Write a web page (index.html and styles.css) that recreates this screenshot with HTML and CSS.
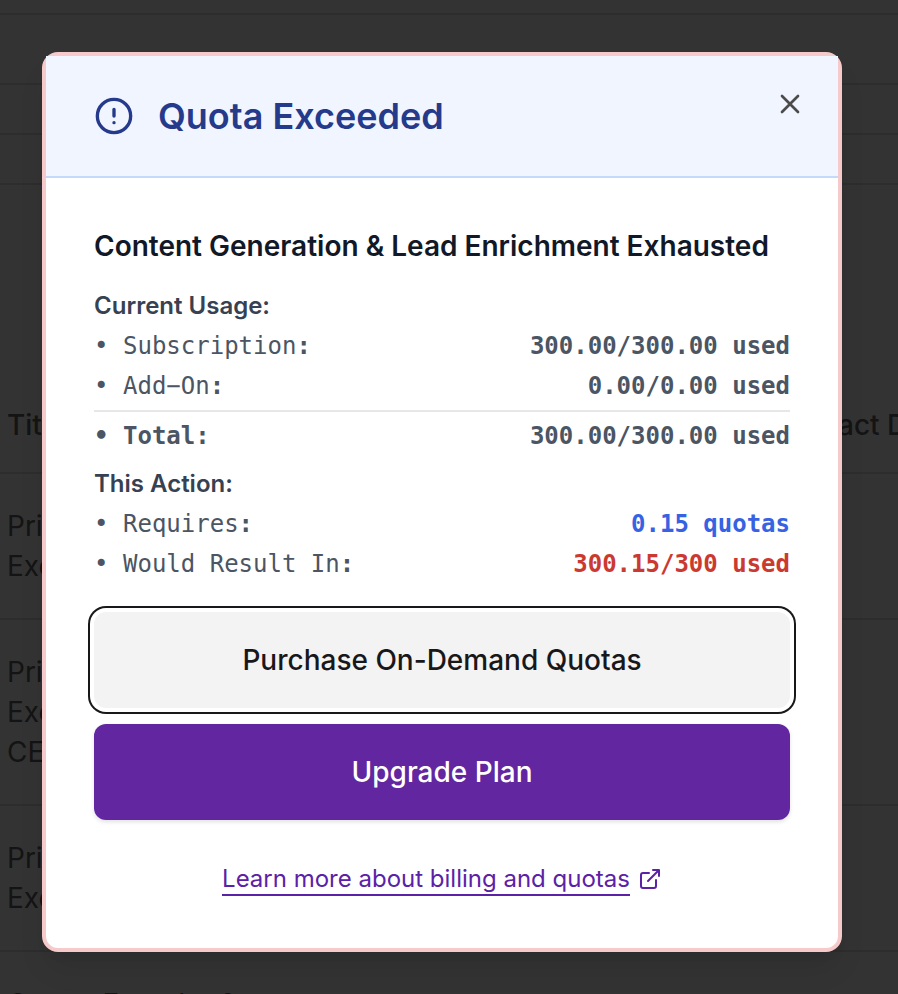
FILE: index.html
```html
<!DOCTYPE html>
<html lang="en">
<head>
<meta charset="utf-8">
<title>Quota Exceeded</title>
<link rel="stylesheet" href="styles.css">
</head>
<body>
<main class="page">
  <div class="bar bar-first"></div>
  <div class="bar bar-nav"></div>
  <div class="bar bar-tabs"></div>
  <div class="bar bar-tools"></div>
  <div class="row head"><span>Title</span><span class="contact">act Details</span></div>
  <div class="row">Pri<br>Exe</div>
  <div class="row">Pri<br>Exe<br>CE</div>
  <div class="row">Pri<br>Exe</div>
  <div class="row last">Owner Founder &amp;</div>
</main>
<div class="overlay">
  <section class="dialog" role="dialog" aria-labelledby="title">
    <header class="header">
      <svg class="alert" viewBox="0 0 24 24"><circle cx="12" cy="12" r="10"/><path d="M12 8v4M12 16h.01"/></svg>
      <h1 id="title">Quota Exceeded</h1>
      <button class="close" aria-label="Close"><svg viewBox="0 0 24 24"><path d="M18 6 6 18M6 6l12 12"/></svg></button>
    </header>
    <div class="body">
      <h2>Content Generation &amp; Lead Enrichment Exhausted</h2>
      <h3>Current Usage:</h3>
      <ul>
        <li><span class="dot">•</span><span>Subscription<b>:</b></span><strong>300.00/300.00 used</strong></li>
        <li><span class="dot">•</span><span>Add−On<b>:</b></span><strong>0.00/0.00 used</strong></li>
        <li class="total"><span class="dot">•</span><span>Total:</span><strong>300.00/300.00 used</strong></li>
      </ul>
      <h3 class="action">This Action:</h3>
      <ul>
        <li><span class="dot">•</span><span>Requires<b>:</b></span><strong class="blue">0.15 quotas</strong></li>
        <li><span class="dot">•</span><span>Would Result In<b>:</b></span><strong class="red">300.15/300 used</strong></li>
      </ul>
      <div class="buttons">
        <button class="btn purchase">Purchase On-Demand Quotas</button>
        <button class="btn upgrade">Upgrade Plan</button>
      </div>
      <a class="learn"><span>Learn more about billing and quotas</span><svg viewBox="0 0 24 24"><path d="M18 13v6a2 2 0 0 1-2 2H5a2 2 0 0 1-2-2V8a2 2 0 0 1 2-2h6M15 3h6v6M10 14 21 3"/></svg></a>
    </div>
  </section>
</div>
</body>
</html>
```
FILE: styles.css
```css
* { box-sizing: border-box; }
body { margin: 0; height: 994px; overflow: hidden; background: #333; font-family: Inter, sans-serif; }
.page { height: 994px; overflow: hidden; color: #141414; font-size: 28px; line-height: 40px; }
.bar { border-bottom: 2px solid #2d2d2d; }
.bar-first { height: 15px; }
.bar-nav { height: 70px; }
.bar-tabs { height: 50px; }
.bar-tools { height: 50px; }
.row { padding: 32px 7px 32px; border-bottom: 2px solid #2d2d2d; }
.head { display: flex; justify-content: space-between; height: 289px; padding: 220px 0 0 7px; font-weight: 500; white-space: nowrap; }
.contact { width: 60px; }
.last { border: 0; white-space: nowrap; }
.overlay { position: absolute; inset: 0; padding: 52px 56px 42px 42px; overflow: hidden; }
.dialog { width: 800px; height: 900px; border: 4px solid #f6caca; border-radius: 16px; background: #fff; box-shadow: 0 20px 30px -6px rgba(0,0,0,.1), 0 8px 12px -8px rgba(0,0,0,.1); }
.header { display: flex; height: 122px; padding: 0 32px 0 48px; align-items: center; background: #f0f5ff; border-bottom: 2px solid #c3dafa; color: #253a8a; }
svg { fill: none; stroke: currentColor; stroke-width: 2; stroke-linecap: round; stroke-linejoin: round; }
.alert { width: 40px; height: 40px; margin-right: 24px; }
h1, h2, h3, ul { margin: 0; padding: 0; }
h1 { font-size: 36px; line-height: 56px; font-weight: 600; }
.close { display: flex; margin: 0 0 24px auto; padding: 0; border: 0; background: none; color: #4b4b4b; }
.close svg { width: 32px; height: 32px; }
.body { padding: 48px 48px 0; }
h2 { color: #111827; font-size: 28px; line-height: 40px; font-weight: 600; white-space: nowrap; }
h3 { margin-top: 24px; color: #374151; font-size: 24px; line-height: 32px; font-weight: 600; }
.action { margin-top: 16px; }
ul { list-style: none; color: #4b5563; font-family: "DejaVu Sans Mono", monospace; font-size: 24px; line-height: 32px; }
li { display: flex; margin-top: 8px; white-space: pre; }
li strong { margin-left: auto; }
.dot { width: 29px; }
.total { margin-top: 8px; padding-top: 8px; border-top: 2px solid #e5e7eb; font-weight: 700; }
.blue { color: #3662e3; }
.red { color: #cb3a31; }
.buttons { display: flex; flex-direction: column; gap: 16px; margin-top: 32px; }
.btn { height: 96px; border: 0; border-radius: 12px; font: 500 28px/40px Inter, sans-serif; }
.purchase { background: #f3f3f3; color: #18181b; box-shadow: 0 0 0 4px #fff, 0 0 0 6px #18181b; }
.upgrade { background: #6126a0; color: #fff; box-shadow: 0 2px 4px rgba(0,0,0,.12); }
.learn { display: flex; justify-content: center; align-items: center; gap: 8px; margin-top: 42px; color: #5b21a6; font-size: 24px; line-height: 30px; }
.learn span { padding-top: 2px; border-bottom: 2px solid; }
.learn svg { width: 24px; height: 24px; }
```
